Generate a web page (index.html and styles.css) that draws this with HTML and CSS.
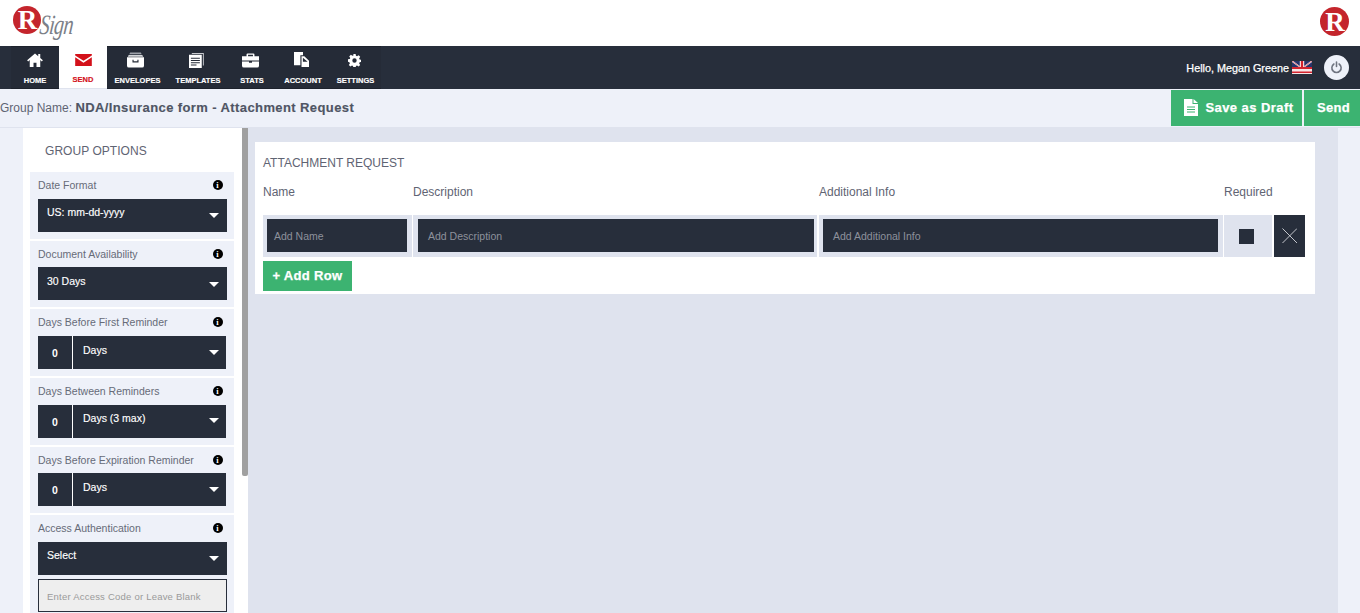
FILE: index.html
```html
<!DOCTYPE html>
<html lang="en">
<head>
<meta charset="utf-8">
<title>RSign</title>
<link rel="stylesheet" href="styles.css">
</head>
<body>
<header class="brand">
  <div class="logo">
    <span class="seal"><span class="seal-r">R</span></span>
    <span class="sign">Sign</span>
  </div>
  <span class="seal seal-right"><span class="seal-r">R</span></span>
</header>

<nav class="topnav">
  <ul class="menu">
    <li class="menu-item w-home">
      <svg class="ico i-home" viewBox="0 0 18 16"><path fill="#fff" d="M9 .5 0 8.400l1.200 1.200L3 8v8h4.300v-5h3.400v5H15V8l1.800 1.600L18 8.400l-3-2.600V1.200h-2.300v2.600z"/></svg>
      <span>HOME</span>
    </li>
    <li class="menu-item w-send active">
      <svg class="ico i-send" viewBox="0 0 18 13"><path fill="#d3111a" d="M0 0h18v1.600L9 7.400 0 1.600zM0 3.600l9 5.800 9-5.800V13H0z"/></svg>
      <span>SEND</span>
    </li>
    <li class="menu-item w-env">
      <svg class="ico i-env" viewBox="0 0 18 16"><path fill="#9ea2aa" d="M3.400 0h11.200l1 2H2.400z"/><path fill="#d5d7da" d="M1.800 2.600h14.400l1 2H.8z"/><path fill="#fff" fill-rule="evenodd" d="M0 5.200h18v8.800a2 2 0 0 1-2 2H2a2 2 0 0 1-2-2zM5.800 7.800v2.800h6.400V7.800h-1.200v1.600H7V7.800z"/></svg>
      <span>ENVELOPES</span>
    </li>
    <li class="menu-item w-tpl">
      <svg class="ico i-tpl" viewBox="0 0 16 16"><path fill="#c9cbd0" d="M3 0h12.800v13.400h-1V1H3z"/><path fill="#fff" fill-rule="evenodd" d="M0 1.800h13.600V16H0zM2 5v1h9.600V5zm0 2.400v1h9.600v-1zm0 2.400v1h9.600v-1zm0 2.400v1h6v-1z"/></svg>
      <span>TEMPLATES</span>
    </li>
    <li class="menu-item w-stats">
      <svg class="ico i-stats" viewBox="0 0 18 15"><path fill="#fff" d="M6 0h6a1.200 1.200 0 0 1 1.200 1.200V3H18v4.400H0V3h4.800V1.200A1.200 1.200 0 0 1 6 0zm.4 1.400V3h5.200V1.400zM0 8.600h7.400V10h3.200V8.600H18V13a2 2 0 0 1-2 2H2a2 2 0 0 1-2-2z"/></svg>
      <span>STATS</span>
    </li>
    <li class="menu-item w-acc">
      <svg class="ico i-acc" viewBox="0 0 16 16"><path fill="#fff" d="M0 0h9.600v3.400H6.800V14H0z"/><path fill="#fff" d="M8 4.600h3l5 4.600V16H8zm1.500 1.400v4.400h5z"/></svg>
      <span>ACCOUNT</span>
    </li>
    <li class="menu-item w-set">
      <svg class="ico i-set" viewBox="0 0 16 16"><path fill="#fff" fill-rule="evenodd" d="M6.600 0h2.800l.4 2.200 1.300.6 1.900-1.300 2 2-1.300 1.900.6 1.300 2.200.4v2.800l-2.200.4-.6 1.300 1.300 1.900-2 2-1.900-1.300-1.300.6-.4 2.200H6.600l-.4-2.200-1.300-.6L3 15.500l-2-2 1.300-1.900-.6-1.300L0 9.400V6.600l2.200-.4.600-1.300L1.500 3l2-2 1.900 1.300 1.300-.6zM8 5.300a2.700 2.700 0 1 0 0 5.400 2.700 2.700 0 0 0 0-5.400z"/></svg>
      <span>SETTINGS</span>
    </li>
  </ul>
  <div class="user">
    <span class="hello">Hello, Megan Greene</span>
    <svg class="flag" viewBox="0 0 20 13"><rect width="20" height="13" fill="#f6e4e5"/><path fill="#27336b" d="M0 0h20v6H0z"/><path stroke="#fff" stroke-width="1.400" d="M0 0l8 6M20 0l-8 6"/><path stroke="#d3232e" stroke-width=".6" d="M0 0l8 6M20 0l-8 6"/><path fill="#fff" d="M7.800 0h4.400v6H7.800z"/><path fill="#d3232e" d="M8.800 0h2.400v8H8.800zM0 6h20v2H0zM0 10.500h20V12H0z"/></svg>
    <span class="power">
      <svg viewBox="0 0 14 14"><path fill="none" stroke="#6f7480" stroke-width="1.700" stroke-linecap="round" d="M4.200 3.200a5 5 0 1 0 5.600 0M7 1v5"/></svg>
    </span>
  </div>
</nav>

<section class="subbar">
  <div class="group-name">Group Name: <strong>NDA/Insurance form - Attachment Request</strong></div>
  <div class="actions">
    <button class="btn draft" type="button">
      <svg class="doc" viewBox="0 0 14 17"><path fill="#fff" d="M0 0h8.500v5H14v12H0zM9.500 0 14 4H9.500z"/><path stroke="#3cb371" stroke-width="1" d="M3 8h8M3 10.500h8M3 13h8"/></svg>
      Save as Draft
    </button>
    <button class="btn send" type="button">Send</button>
  </div>
</section>

<main class="workspace">
  <aside class="sidebar">
    <h2 class="side-title">GROUP OPTIONS</h2>

    <div class="opt">
      <div class="opt-head"><span>Date Format</span><i class="info">i</i></div>
      <div class="select"><span>US: mm-dd-yyyy</span><b class="caret"></b></div>
    </div>
    <div class="opt">
      <div class="opt-head"><span>Document Availability</span><i class="info">i</i></div>
      <div class="select"><span>30 Days</span><b class="caret"></b></div>
    </div>
    <div class="opt">
      <div class="opt-head"><span>Days Before First Reminder</span><i class="info">i</i></div>
      <div class="split"><span class="num">0</span><div class="select inner"><span>Days</span><b class="caret"></b></div></div>
    </div>
    <div class="opt">
      <div class="opt-head"><span>Days Between Reminders</span><i class="info">i</i></div>
      <div class="split"><span class="num">0</span><div class="select inner"><span>Days (3 max)</span><b class="caret"></b></div></div>
    </div>
    <div class="opt">
      <div class="opt-head"><span>Days Before Expiration Reminder</span><i class="info">i</i></div>
      <div class="split"><span class="num">0</span><div class="select inner"><span>Days</span><b class="caret"></b></div></div>
    </div>
    <div class="opt">
      <div class="opt-head"><span>Access Authentication</span><i class="info">i</i></div>
      <div class="select"><span>Select</span><b class="caret"></b></div>
      <div class="code">Enter Access Code or Leave Blank</div>
    </div>
  </aside>
  <div class="scrollbar"><div class="thumb"></div></div>

  <div class="canvas">
    <section class="card">
      <h3 class="card-title">ATTACHMENT REQUEST</h3>
      <div class="grid heads">
        <span>Name</span><span>Description</span><span>Additional Info</span><span>Required</span>
      </div>
      <div class="grid row">
        <div class="cell c-name"><div class="field">Add Name</div></div>
        <div class="cell c-desc"><div class="field">Add Description</div></div>
        <div class="cell c-info"><div class="field">Add Additional Info</div></div>
        <div class="cell c-req"><span class="check"></span></div>
        <div class="del">
          <svg viewBox="0 0 16 16"><path fill="none" stroke="#c9ccd2" stroke-width="1" d="M.5.500l15 15M15.500.500l-15 15"/></svg>
        </div>
      </div>
      <button class="btn add" type="button">+ Add Row</button>
    </section>
  </div>
</main>
</body>
</html>
```
FILE: styles.css
```css
* { box-sizing: border-box; }
html, body { margin: 0; padding: 0; height: 613px; overflow: hidden; }
body {
  font-family: "Liberation Sans", Arial, sans-serif;
  background: #eef1f9;
  color: #5f6473;
  display: flex;
  flex-direction: column;
}

/* brand */
.brand {
  height: 46px;
  flex: none;
  background: #fff;
  display: flex;
  justify-content: space-between;
  align-items: flex-start;
  padding: 6px 11px 0 13px;
}
.logo { display: flex; align-items: flex-start; }
.seal {
  width: 28px;
  height: 28px;
  border-radius: 50%;
  background: #c4252c;
  display: flex;
  align-items: center;
  justify-content: center;
  flex: none;
}
.seal-r {
  font: bold 27px/28px "Liberation Serif", serif;
  color: #fff;
  margin-left: 1px;
}
.sign {
  font: italic 28px/30px "Liberation Serif", serif;
  color: #7b7f88;
  margin-left: -1px;
  margin-top: 4px;
  letter-spacing: -1px;
  transform: scaleX(.72) skewX(-8deg);
  transform-origin: left center;
}
.seal-right { margin-top: 1px; width: 29px; height: 29px; }

/* nav */
.topnav {
  height: 43px;
  flex: none;
  background: #272e3b;
  display: flex;
  justify-content: space-between;
  padding-left: 11px;
}
.menu {
  list-style: none;
  margin: 0;
  padding: 0;
  display: flex;
  background: #252b37;
  border-top: 1px solid #1d222c;
  border-bottom: 1px solid #1d222c;
}
.menu-item {
  display: flex;
  flex-direction: column;
  align-items: center;
  color: #fff;
  font-size: 7.500px;
  font-weight: bold;
  line-height: 10px;
  padding-top: 5px;
  -webkit-text-stroke: .15px currentColor;
}
.menu-item span { margin-top: auto; padding-bottom: 2px; white-space: nowrap; }
.ico { display: block; }
.i-home { width: 16px; height: 14px; margin-top: 1px; }
.i-send { width: 17px; height: 12px; margin-top: 2px; }
.i-env { width: 17px; height: 16px; margin-right: 4px; }
.i-tpl { width: 15px; height: 15px; margin-top: 1px; margin-right: 3px; }
.i-stats { width: 17px; height: 15px; margin-top: 1px; margin-right: 3px; }
.i-acc { width: 15px; height: 15px; margin-right: 3px; }
.i-set { width: 13px; height: 13px; margin-top: 2px; margin-right: 3px; }
.w-home { width: 48px; }
.w-send { width: 48px; }
.w-env { width: 61px; }
.w-tpl { width: 60px; }
.w-stats { width: 48px; }
.w-acc { width: 54px; }
.w-set { width: 51px; }
.active {
  background: #fff;
  color: #d3111a;
  border-bottom: 1px solid #dfe3ee;
  margin: -1px 0;
  padding-top: 6px;
}
.active span { padding-bottom: 3px; }
.user { display: flex; align-items: center; padding-right: 11px; }
.hello { color: #fff; font-size: 10.800px; margin-right: 3px; -webkit-text-stroke: .25px #fff; }
.flag { width: 20px; height: 13px; margin-right: 12px; }
.power {
  width: 25px;
  height: 25px;
  border-radius: 50%;
  background: #eef1f9;
  display: flex;
  align-items: center;
  justify-content: center;
}
.power svg { width: 13px; height: 13px; }

/* sub bar */
.subbar {
  height: 39px;
  flex: none;
  background: #eef1f9;
  border-bottom: 1px solid #dfe3ee;
  display: flex;
  justify-content: space-between;
  align-items: flex-start;
}
.group-name { font-size: 12px; color: #5f6473; line-height: 37px; }
.group-name strong { font-size: 13px; color: #4f5564; letter-spacing: .4px; -webkit-text-stroke: .15px #4f5564; }
.actions { display: flex; gap: 2px; padding-top: 1px; }
.btn {
  border: 0;
  margin: 0;
  background: #3cb371;
  color: #fff;
  font: bold 13px "Liberation Sans", Arial, sans-serif;
  letter-spacing: .45px;
  -webkit-text-stroke: .25px #fff;
  display: flex;
  align-items: center;
  justify-content: center;
  padding: 0 0 2px;
}
.draft { width: 131px; height: 36px; gap: 7px; padding-left: 5px; }
.doc { width: 14px; height: 17px; }
.send { width: 56px; height: 36px; padding-left: 3px; letter-spacing: .3px; }

/* workspace */
.workspace {
  flex: 1;
  min-height: 0;
  display: flex;
  padding: 0 22px 0 23px;
  overflow: hidden;
}
.sidebar {
  width: 219px;
  flex: none;
  background: #fff;
  padding: 0 8px 0 7px;
}
.side-title {
  margin: 0 0 0 15px;
  height: 44px;
  font-size: 12px;
  font-weight: normal;
  line-height: 46px;
  color: #5f6473;
  letter-spacing: .05px;
}
.opt {
  background: #eef1f9;
  height: 66.700px;
  margin-bottom: 2px;
  padding: 0 7px 0 8px;
}
.opt:last-child { height: 110px; }
.opt-head {
  height: 26.700px;
  display: flex;
  justify-content: space-between;
  align-items: center;
  font-size: 10.500px;
  padding: 0 4.500px .8px 0;
  color: #666b78;
}
.info {
  width: 10px;
  height: 10px;
  border-radius: 50%;
  background: #000;
  color: #fff;
  font: bold 8.500px/10px "Liberation Serif", serif;
  text-align: center;
}
.select {
  height: 33px;
  background: #272e3b;
  color: #fff;
  font-size: 10.500px;
  padding: 7.300px 8px 0 9px;
  display: flex;
  justify-content: space-between;
  -webkit-text-stroke: .15px #fff;
}
.caret {
  width: 0;
  height: 0;
  border-left: 5px solid transparent;
  border-right: 5px solid transparent;
  border-top: 5px solid #fff;
  margin: 7px 0 0;
}
.split { display: flex; height: 33px; width: 188px; }
.num {
  width: 35px;
  background: #272e3b;
  color: #fff;
  font-size: 10.500px;
  font-weight: bold;
  text-align: center;
  line-height: 34.600px;
  border-right: 1px solid #fff;
  flex: none;
}
.inner { flex: 1; padding: 7.700px 7px 0 10px; }
.inner .caret { margin-top: 6px; }
.code {
  margin-top: 4px;
  height: 33px;
  background: #eeeeee;
  border: 1px solid #272e3b;
  color: #9a9a9a;
  font-size: 9.500px;
  letter-spacing: .22px;
  padding-left: 8px;
  line-height: 33px;
}

/* scrollbar */
.scrollbar { width: 6px; flex: none; background: #fff; }
.thumb { height: 348px; background: #a0a0a0; border-radius: 0 0 2px 2px; }

/* canvas */
.canvas {
  flex: 1;
  background: #dfe3ee;
  padding: 14px 23px 0 7px;
}
.card {
  background: #fff;
  height: 152px;
  padding: 0 10px 0 8px;
}
.card-title {
  margin: 0;
  font-size: 12px;
  font-weight: normal;
  color: #5f6473;
  height: 36px;
  line-height: 43px;
}
.grid {
  display: grid;
  grid-template-columns: 150px 406px 405px 50px 31px;
}
.heads {
  height: 37px;
  font-size: 12px;
  line-height: 28px;
  grid-template-columns: 150px 406px 405px 1fr;
}
.row { height: 42px; }
.cell {
  background: #dfe3ee;
  height: 42px;
  display: flex;
  align-items: flex-start;
  padding-top: 4px;
  border-right: 1px solid #fff;
}
.c-name { padding-left: 4px; padding-right: 5px; }
.c-desc { padding-left: 5px; padding-right: 3px; border-right-width: 2px; }
.c-info { padding-left: 4px; padding-right: 5px; }
.c-req { justify-content: center; align-items: center; padding: 1px 3px 0 0; border-right: 2px solid #fff; }
.field {
  flex: 1;
  height: 33px;
  background: #272e3b;
  color: #8d919b;
  font-size: 10.500px;
  line-height: 34px;
  padding-left: 10px;
}
.c-name .field { padding-left: 7px; }
.check { width: 15px; height: 15px; background: #272e3b; }
.del {
  background: #272e3b;
  height: 42px;
  display: flex;
  align-items: center;
  justify-content: center;
}
.del svg { width: 15.500px; height: 15.500px; }
.add { width: 89px; height: 30px; margin-top: 4px; letter-spacing: .35px; }
```
